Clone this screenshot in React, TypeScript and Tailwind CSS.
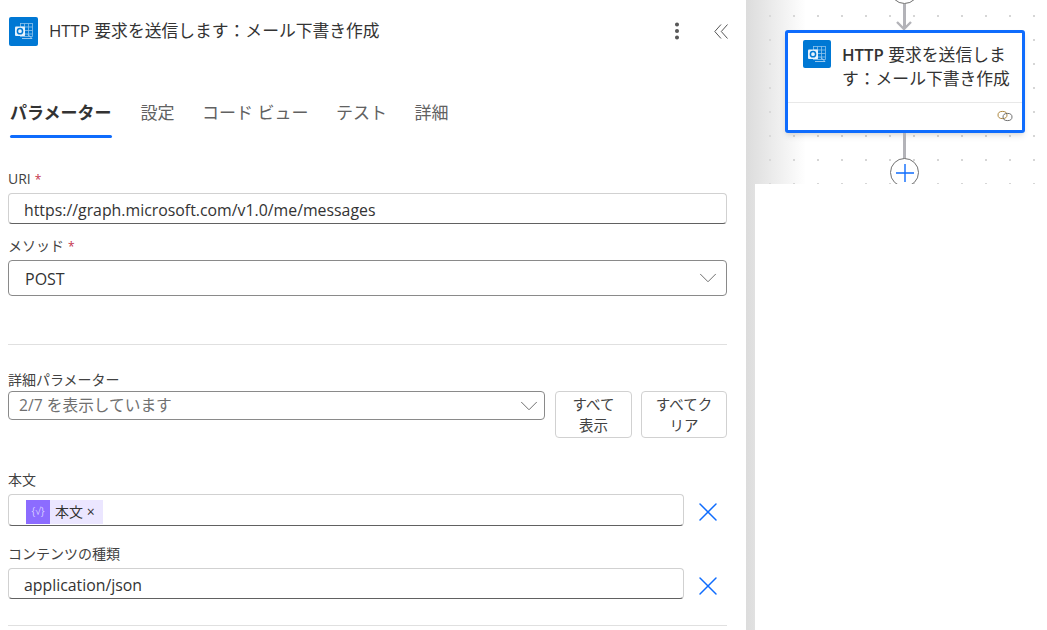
import React from 'react';
import { ChevronDown, MoreVertical, X } from 'lucide-react';

const font = 'font-["Open_Sans","Noto_Sans_CJK_JP",sans-serif]';

const OutlookIcon = ({ className }: { className: string }) => (
  <div className={`flex items-center justify-center rounded-[2px] bg-[#0078d4] ${className}`}>
    <svg width="22" height="22" viewBox="0 0 22 22" fill="none">
      <rect x="7.5" y="3.5" width="12" height="13" fill="#0078d4" stroke="#8fc4ec" strokeWidth="0.8" />
      <path d="M7.5 7h12M7.5 10.5h12M7.5 14h12M11.5 3.5v13M15.5 3.5v13" stroke="#8fc4ec" strokeWidth="0.8" />
      <path d="M9 18.5h10l-4-4" stroke="#bcdcf5" strokeWidth="0.8" />
      <rect x="2" y="6.5" width="10" height="9.5" rx="1" fill="#e8f3fc" />
      <circle cx="7" cy="11.2" r="2.6" stroke="#0078d4" strokeWidth="1.5" />
    </svg>
  </div>
);

const Label = ({ text, required }: { text: string; required?: boolean }) => (
  <div className="h-[20px] text-[14px] leading-[20px] text-[#424242]">
    {text}
    {required && <span className="ml-[4px] text-[12px] text-[#c4314b]">*</span>}
  </div>
);

const Input = ({ children, className = '' }: { children: React.ReactNode; className?: string }) => (
  <div className={`flex items-center rounded-[4px] border border-[#d1d1d1] border-b-[#616161] bg-white ${className}`}>
    {children}
  </div>
);

const Remove = () => (
  <div className="flex w-[43px] items-center pl-[8px] pt-[4px]">
    <X size={32} strokeWidth={1.1} className="shrink-0 text-[#0f6cfd]" />
  </div>
);

const Tab = ({ text, active }: { text: string; active?: boolean }) => (
  <div className={`relative flex h-[50px] items-center ${active ? 'mr-[1.5px]' : ''}`}>
    <span className={active ? 'text-[17px] font-bold text-[#333]' : 'text-[17px] text-[#616161]'}>{text}</span>
    {active && <div className="absolute bottom-[0px] left-0 right-0 h-[3px] rounded-full bg-[#0f6cfd]" />}
  </div>
);

const Panel = () => (
  <div className="flex h-[630px] w-[746px] shrink-0 flex-col overflow-hidden bg-white pl-[8px] pr-[19px]">
    <div className="flex h-[62px] shrink-0 items-center">
      <OutlookIcon className="ml-[1px] h-[29px] w-[29px]" />
      <div className="ml-[11px] flex-1 text-[16.8px] text-[#333]">HTTP 要求を送信します：メール下書き作成</div>
      <MoreVertical size={22} strokeWidth={2.4} className="mr-[26px] text-[#555]" />
      <svg width="14" height="15" viewBox="0 0 14 15" fill="none" className="mr-[-1px] mt-[1px]" stroke="#555" strokeWidth="1">
        <path d="M7 .5 .8 7.5 7 14.5M13.5 .5 7.3 7.5l6.2 7" />
      </svg>
    </div>

    <div className="mt-[26px] flex h-[50px] shrink-0 gap-[27.5px] pl-[2px]">
      <Tab text="パラメーター" active />
      <Tab text="設定" />
      <Tab text="コード ビュー" />
      <Tab text="テスト" />
      <Tab text="詳細" />
    </div>

    <div className="mt-[31px]">
      <Label text="URI" required />
    </div>
    <Input className="mt-[4px] h-[31px] pl-[15px] pt-[5px] text-[15.85px] text-[#333]">https://graph.microsoft.com/v1.0/me/messages</Input>

    <div className="mt-[12px]">
      <Label text="メソッド" required />
    </div>
    <div className="mt-[4px] flex h-[36px] items-center justify-between rounded-[4px] border border-[#8a8a8a] pl-[16px] pr-[3px] text-[16px] text-[#333]">
      <span className="pt-[2px]">POST</span>
      <ChevronDown size={30} strokeWidth={0.8} className="shrink-0 text-[#707070]" />
    </div>

    <div className="mt-[48px] h-px bg-[#e0e0e0]" />

    <div className="mt-[25px]">
      <Label text="詳細パラメーター" />
    </div>
    <div className="mt-[1px] flex items-start gap-[10px]">
      <div className="flex h-[29px] flex-1 items-center justify-between rounded-[4px] border border-[#8a8a8a] pl-[10px] pr-0 text-[15.7px] text-[#707070]">
        2/7 を表示しています
        <ChevronDown size={30} strokeWidth={0.8} className="shrink-0 text-[#707070]" />
      </div>
      <div className="flex h-[47px] w-[77px] items-center justify-center rounded-[4px] border border-[#d1d1d1] text-center text-[14.5px] leading-[21px] text-[#424242]">
        すべて<br />表示
      </div>
      <div className="ml-[-1px] flex h-[47px] w-[86px] items-center justify-center rounded-[4px] border border-[#d1d1d1] text-center text-[14.5px] leading-[21px] text-[#424242]">
        すべてク<br />リア
      </div>
    </div>

    <div className="mt-[32px]">
      <Label text="本文" />
    </div>
    <div className="mt-[4px] flex h-[32px]">
      <Input className="flex-1 pl-[17px] pt-[3px]">
        <div className="flex h-[24px] items-center bg-[#ebe6ff] pr-[8px] text-[14px] text-[#333]">
          <div className="mr-[5px] flex h-[24px] w-[24px] items-center justify-center bg-[#8c6cff] text-[10px] text-[#d9ceff]">{'{√}'}</div>
          本文 ×
        </div>
      </Input>
      <Remove />
    </div>

    <div className="mt-[18px]">
      <Label text="コンテンツの種類" />
    </div>
    <div className="mt-[4px] flex h-[31px]">
      <Input className="flex-1 pl-[15px] pt-[4px] text-[15.85px] text-[#333]">application/json</Input>
      <Remove />
    </div>

    <div className="mt-[26px] h-px shrink-0 bg-[#e0e0e0]" />
  </div>
);

const Canvas = () => (
  <div className="relative h-[630px] flex-1 overflow-hidden bg-white bg-[radial-gradient(#d6d6d6_1px,transparent_1px)] bg-[size:24px_24px] bg-[position:-12px_4px]">
    <div className="absolute inset-y-0 left-0 w-[60px] bg-gradient-to-r from-[#dcdcdc] to-transparent" />

    <div className="absolute left-[144px] top-[-25px] h-[29px] w-[29px] rounded-full border border-[#707070] bg-white" />
    <div className="absolute left-[157px] top-[4px] h-[24px] w-[3px] bg-[#b3b3b8]" />
    <svg width="16" height="10" viewBox="0 0 16 10" className="absolute left-[150px] top-[21px]" fill="none" stroke="#b3b3b8" strokeWidth="2.4">
      <path d="M1 1l7 7 7-7" />
    </svg>

    <div className="absolute left-[39px] top-[30px] h-[103px] w-[240px] rounded-[3px] border-[3px] border-[#0f6cfd] bg-white shadow-md">
      <div className="flex h-[70px] border-b border-[#e8e8e8] pl-[15px] pt-[7px]">
        <OutlookIcon className="h-[28px] w-[28px] shrink-0" />
        <div className="ml-[11px] pt-[3px] text-[16.8px] leading-[24px] text-[#333]">
          <span className="font-semibold">HTTP</span> 要求を送信しま
          <br />
          す：メール下書き作成
        </div>
      </div>
      <div className="flex justify-end pr-[9px] pt-[7px]">
        <svg width="16" height="12" viewBox="0 0 16 12" fill="none" strokeWidth="0.9">
          <ellipse cx="5.5" cy="5" rx="4.5" ry="3.6" stroke="#a67c2d" />
          <ellipse cx="10.5" cy="7" rx="4.5" ry="3.6" stroke="#616161" />
        </svg>
      </div>
    </div>

    <div className="absolute left-[157px] top-[133px] h-[27px] w-[3px] bg-[#b3b3b8]" />
    <div className="absolute left-[144px] top-[158px] flex h-[29px] w-[29px] items-center justify-center rounded-full border border-[#707070] bg-white">
      <svg width="20" height="20" viewBox="0 0 20 20" stroke="#0f6cfd" strokeWidth="1.4">
        <path d="M10 1v18M1 10h18" />
      </svg>
    </div>

    <div className="absolute bottom-0 left-[9px] right-0 top-[184px] bg-white" />
  </div>
);

export default function App() {
  return (
    <div className={`flex h-[630px] w-[1047px] overflow-hidden bg-white ${font}`}>
      <Panel />
      <Canvas />
    </div>
  );
}
